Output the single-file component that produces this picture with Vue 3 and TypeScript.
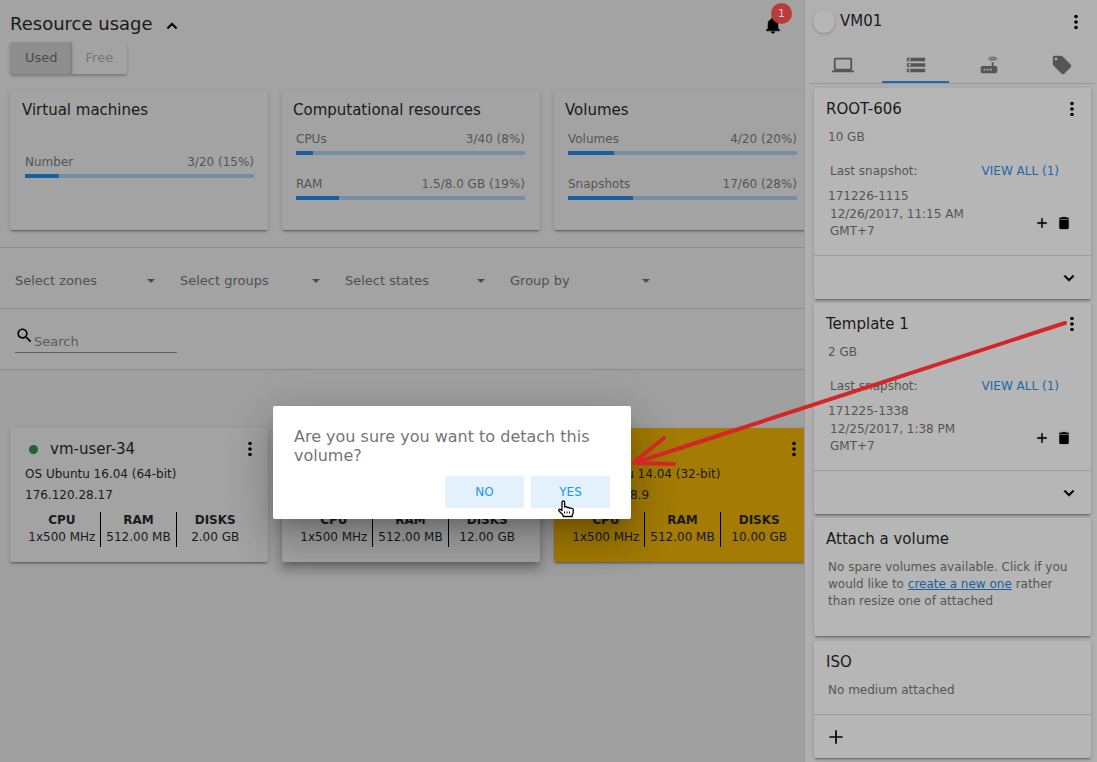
<script setup lang="ts">
interface Meter { label: string; value: string; percent: number }
interface UsageCard { title: string; meters: Meter[] }
interface Machine {
  name: string; os: string; ip: string; cpu: string; ram: string; disks: string; tone: string
}
interface Volume { name: string; size: string; snapshot: string; date: string }

const usage: UsageCard[] = [
  { title: 'Virtual machines', meters: [{ label: 'Number', value: '3/20 (15%)', percent: 15 }] },
  {
    title: 'Computational resources',
    meters: [
      { label: 'CPUs', value: '3/40 (8%)', percent: 7.5 },
      { label: 'RAM', value: '1.5/8.0 GB (19%)', percent: 18.75 },
    ],
  },
  {
    title: 'Volumes',
    meters: [
      { label: 'Volumes', value: '4/20 (20%)', percent: 20 },
      { label: 'Snapshots', value: '17/60 (28%)', percent: 28.3 },
    ],
  },
]
const filters: string[] = ['Select zones', 'Select groups', 'Select states', 'Group by']
const machines: Machine[] = [
  { name: 'vm-user-34', os: 'OS Ubuntu 16.04 (64-bit)', ip: '176.120.28.17', cpu: '1x500 MHz', ram: '512.00 MB', disks: '2.00 GB', tone: 'plain' },
  { name: '', os: '', ip: '', cpu: '1x500 MHz', ram: '512.00 MB', disks: '12.00 GB', tone: 'selected' },
  { name: '', os: 'OS Ubuntu 14.04 (32-bit)', ip: '176.120.28.9', cpu: '1x500 MHz', ram: '512.00 MB', disks: '10.00 GB', tone: 'amber' },
]
const tabs: { label: string; path: string }[] = [
  { label: 'Details', path: 'M20 18c1.100 0 1.990-.9 1.990-2L22 6c0-1.100-.9-2-2-2H4c-1.100 0-2 .9-2 2v10c0 1.100.9 2 2 2H0v2h24v-2h-4zM4 6h16v10H4V6z' },
  { label: 'Storage', path: 'M2 20h20v-4H2v4zm2-3h2v2H4v-2zM2 4v4h20V4H2zm4 3H4V5h2v2zm-4 7h20v-4H2v4zm2-3h2v2H4v-2z' },
  { label: 'Network', path: 'M20.200 5.900l.8-.8C19.600 3.700 17.800 3 16 3s-3.600.7-5 2.100l.8.8C13 4.800 14.500 4.200 16 4.200s3 .6 4.200 1.700zm-.9.8c-.9-.9-2.100-1.400-3.300-1.400s-2.400.5-3.300 1.400l.8.8c.7-.7 1.600-1 2.500-1 .9 0 1.800.3 2.500 1l.8-.8zM19 13h-2V9h-2v4H5c-1.100 0-2 .9-2 2v4c0 1.100.9 2 2 2h14c1.100 0 2-.9 2-2v-4c0-1.100-.9-2-2-2zM8 18H6v-2h2v2zm3.500 0h-2v-2h2v2zm3.500 0h-2v-2h2v2z' },
  { label: 'Tags', path: 'M21.410 11.580l-9-9C12.050 2.220 11.550 2 11 2H4c-1.100 0-2 .9-2 2v7c0 .55.22 1.050.59 1.420l9 9c.36.36.86.58 1.410.58.55 0 1.050-.22 1.410-.59l7-7c.37-.36.59-.86.59-1.410 0-.55-.23-1.060-.59-1.420zM5.500 7C4.670 7 4 6.330 4 5.500S4.670 4 5.500 4 7 4.670 7 5.500 6.330 7 5.500 7z' },
]
const volumes: Volume[] = [
  { name: 'ROOT-606', size: '10 GB', snapshot: '171226-1115', date: '12/26/2017, 11:15 AM GMT+7' },
  { name: 'Template 1', size: '2 GB', snapshot: '171225-1338', date: '12/25/2017, 1:38 PM GMT+7' },
]
</script>

<template>
  <div class="app">
    <main class="main">
      <header class="head">
        <div class="head-title">
          <h1>Resource usage</h1>
          <button class="icon-btn caret" aria-label="Collapse">
            <svg width="20" height="20" viewBox="0 0 24 24"><path d="M12 8l-6 6 1.410 1.410L12 10.830l4.590 4.580L18 14z" stroke="#000" stroke-width=".8" /></svg>
          </button>
        </div>
        <button class="icon-btn bell" aria-label="Notifications">
          <svg width="20" height="20" viewBox="0 0 24 24"><path d="M12 22c1.100 0 2-.9 2-2h-4c0 1.100.89 2 2 2zm6-6v-5c0-3.070-1.640-5.640-4.500-6.320V4c0-.83-.67-1.500-1.500-1.500s-1.500.67-1.500 1.500v.68C7.630 5.360 6 7.920 6 11v5l-2 2v1h16v-1l-2-2z" stroke="#000" stroke-width=".6" /></svg>
          <span class="badge">1</span>
        </button>
      </header>

      <div class="toggle">
        <button class="on">Used</button>
        <button>Free</button>
      </div>

      <section class="row usage">
        <article v-for="card in usage" :key="card.title" class="card usage-card">
          <h2>{{ card.title }}</h2>
          <div class="meters">
            <div v-for="m in card.meters" :key="m.label" class="meter">
              <div class="meter-text"><span>{{ m.label }}</span><span>{{ m.value }}</span></div>
              <div class="bar"><div class="fill" :style="{ width: m.percent + '%' }"></div></div>
            </div>
          </div>
        </article>
      </section>

      <section class="filters">
        <label v-for="f in filters" :key="f" class="filter">
          <select :aria-label="f"><option>{{ f }}</option></select>
          <svg width="8" height="4" viewBox="0 0 8 4"><path d="M0 0h8L4 4z" /></svg>
        </label>
      </section>

      <section class="search-row">
        <label class="search">
          <svg width="19" height="19" viewBox="0 0 24 24"><path d="M15.500 14h-.79l-.28-.27C15.410 12.590 16 11.110 16 9.500 16 5.910 13.090 3 9.500 3S3 5.910 3 9.500 5.910 16 9.500 16c1.610 0 3.090-.59 4.230-1.570l.27.28v.79l5 4.990L20.490 19l-4.990-5zm-6 0C7.010 14 5 11.990 5 9.500S7.010 5 9.500 5 14 7.010 14 9.500 11.990 14 9.500 14z" /></svg>
          <input type="text" placeholder="Search" aria-label="Search">
        </label>
      </section>

      <section class="row machines">
        <article v-for="vm in machines" :key="vm.disks" class="card vm" :class="vm.tone">
          <div class="vm-head">
            <span class="dot"></span>
            <h3>{{ vm.name }}</h3>
            <button class="icon-btn" aria-label="Machine menu">
              <svg width="22" height="22" viewBox="0 0 24 24"><circle cx="12" cy="6" r="2" /><circle cx="12" cy="12" r="2" /><circle cx="12" cy="18" r="2" /></svg>
            </button>
          </div>
          <p>{{ vm.os }}</p>
          <p>{{ vm.ip }}</p>
          <dl class="stats">
            <div><dt>CPU</dt><dd>{{ vm.cpu }}</dd></div>
            <div><dt>RAM</dt><dd>{{ vm.ram }}</dd></div>
            <div><dt>DISKS</dt><dd>{{ vm.disks }}</dd></div>
          </dl>
        </article>
      </section>
    </main>

    <aside class="side">
      <header class="side-head">
        <span class="avatar"></span>
        <h2>VM01</h2>
        <button class="icon-btn" aria-label="VM menu">
          <svg width="22" height="22" viewBox="0 0 24 24"><circle cx="12" cy="6" r="2" /><circle cx="12" cy="12" r="2" /><circle cx="12" cy="18" r="2" /></svg>
        </button>
      </header>
      <nav class="tabs">
        <button v-for="t in tabs" :key="t.label" :aria-label="t.label" :class="{ active: t.label === 'Storage' }">
          <svg width="22" height="22" viewBox="0 0 24 24"><path :d="t.path" /></svg>
        </button>
      </nav>

      <div class="side-list">
        <article v-for="v in volumes" :key="v.name" class="card side-card">
          <div class="side-title">
            <h3>{{ v.name }}</h3>
            <button class="icon-btn" aria-label="Volume menu">
              <svg width="22" height="22" viewBox="0 0 24 24"><circle cx="12" cy="6" r="2" /><circle cx="12" cy="12" r="2" /><circle cx="12" cy="18" r="2" /></svg>
            </button>
          </div>
          <p class="size">{{ v.size }}</p>
          <div class="snap-head">
            <span>Last snapshot:</span>
            <button class="link-btn">VIEW ALL (1)</button>
          </div>
          <p class="snap-name">{{ v.snapshot }}</p>
          <div class="snap">
            <span class="date">{{ v.date }}</span>
            <button class="icon-btn" aria-label="Create snapshot">
              <svg width="16" height="16" viewBox="0 0 24 24"><path d="M19 13h-6v6h-2v-6H5v-2h6V5h2v6h6v2z" stroke="#000" stroke-width=".4" /></svg>
            </button>
            <button class="icon-btn" aria-label="Delete snapshot">
              <svg width="16" height="16" viewBox="0 0 24 24"><path d="M5 19c0 1.100.9 2 2 2h10c1.100 0 2-.9 2-2V7H5v12zM19 4h-3.500l-1-1h-5l-1 1H5v2h14V4z" stroke="#000" stroke-width=".4" /></svg>
            </button>
          </div>
          <div class="side-foot end">
            <button class="icon-btn" aria-label="Expand">
              <svg width="20" height="20" viewBox="0 0 24 24"><path d="M16.590 8.590L12 13.170 7.410 8.590 6 10l6 6 6-6z" stroke="#000" stroke-width=".8" /></svg>
            </button>
          </div>
        </article>

        <article class="card side-card attach">
          <div class="side-title"><h3>Attach a volume</h3></div>
          <p class="note">No spare volumes available. Click if you would like to <a href="#create">create a new one</a> rather than resize one of attached</p>
        </article>

        <article class="card side-card">
          <div class="side-title"><h3>ISO</h3></div>
          <p class="note">No medium attached</p>
          <div class="side-foot">
            <button class="icon-btn" aria-label="Attach ISO">
              <svg width="20" height="20" viewBox="0 0 24 24"><path d="M20 13h-7v7h-2v-7H4v-2h7V4h2v7h7v2z" /></svg>
            </button>
          </div>
        </article>
      </div>
    </aside>

    <div class="dialog" role="dialog" aria-modal="true">
      <p>Are you sure you want to detach this volume?</p>
      <div class="actions">
        <button>NO</button>
        <button>YES</button>
      </div>
    </div>

    <svg class="arrow" width="440" height="160" viewBox="0 0 440 160" aria-hidden="true">
      <path d="M435 13L4 153M34 128L4 152M44 154L4 153" />
    </svg>
    <svg class="cursor" width="17" height="18" viewBox="0 0 17 18" aria-hidden="true">
      <path d="M4 2.500q0-1.500 1.300-1.500T6.600 2.500V7q2-.8 2.700.6 2-.5 2.600.8 2.800-.8 3.300 1V12q0 2-1 3v1.500H5V15L1 11q-.8-2 1-1.800L4 10.500z" />
      <path class="folds" d="M6.500 11.500v2M9 11.500v2M11.500 11.500v2" />
    </svg>
  </div>
</template>

<style>
body { margin: 0; background: #a0a0a0; }
</style>

<style scoped>
.app {
  display: flex;
  position: relative;
  min-height: 100vh;
  overflow: hidden;
  font-family: "DejaVu Sans", sans-serif;
  font-size: 12px;
  line-height: 17px;
  color: #1a1a1a;
}
.app *, .app { box-sizing: border-box; }
h1, h2, h3, p, dl, dd { margin: 0; font-weight: 400; }
button { font: inherit; border: 0; padding: 0; background: none; cursor: pointer; }
svg { display: block; }
.icon-btn { flex: none; color: #000; }
.card {
  border-radius: 2px;
  background: #a3a3a3;
  box-shadow: 0 3px 1px -2px rgba(0, 0, 0, .2), 0 2px 2px 0 rgba(0, 0, 0, .14), 0 1px 5px 0 rgba(0, 0, 0, .12);
}

.main { flex: 1; min-width: 0; overflow: hidden; background: #a0a0a0; }
.head { display: flex; justify-content: space-between; align-items: center; height: 42px; padding: 6px 21px 0 10px; background: #a3a3a3; }
.head-title { display: flex; align-items: center; gap: 9px; }
.caret { margin-top: 4px; }
h1 { font-size: 18px; line-height: 24px; }
.bell { position: relative; margin-top: 2px; }
.badge {
  position: absolute; left: 8px; top: -12px; width: 21px; height: 21px; border-radius: 50%;
  background: #b93c3a; color: #d0d0d0; font-size: 11px; line-height: 21px; text-align: center;
}
.toggle { display: flex; padding: 0 10px; background: #a3a3a3; }
.toggle button { height: 32px; padding: 0 14px 2px; font-size: 13px; color: #777; box-shadow: 0 2px 3px rgba(0, 0, 0, .25); border-radius: 0 2px 2px 0; }
.toggle .on { padding: 0 14px 2px 15px; background: #8e8e8e; color: #4c4c4c; border-radius: 2px 0 0 2px; }

.row { display: flex; gap: 14px; padding: 0 10px; }
.row > .card { flex: 0 0 258px; }
.usage { padding-top: 17px; padding-bottom: 17px; background: #a3a3a3; border-bottom: 1px solid #8b8b8b; }
.usage-card { display: flex; flex-direction: column; height: 139px; padding: 9px 15px 19px 14px; }
.usage-card:first-child { padding-right: 14px; padding-left: 15px; }
.usage-card h2 { margin-left: -3px; font-size: 15px; line-height: 20px; }
.meters { flex: 1; display: flex; flex-direction: column; justify-content: center; gap: 21px; color: #555; }
.meter-text { display: flex; justify-content: space-between; line-height: 17px; }
.bar { height: 4px; margin-top: 3px; background: #778da2; }
.fill { height: 4px; background: #1760a0; }

.filters { display: flex; gap: 25px; height: 61px; padding: 0 15px; align-items: center; background: #a3a3a3; border-bottom: 1px solid #8b8b8b; }
.filter { display: flex; align-items: center; width: 140px; margin-top: 5px; }
.filter svg { flex: none; fill: #4c4c4c; }
select { flex: 1; appearance: none; border: 0; padding: 0; background: none; font: inherit; font-size: 13px; line-height: 20px; color: #505050; }
.search-row { height: 61px; padding: 15px; background: #a3a3a3; border-bottom: 1px solid #8b8b8b; }
.search { display: flex; align-items: flex-start; width: 162px; height: 29px; border-bottom: 1px solid #5c5c5c; }
.search svg { margin-top: 2px; }
.search input { width: 140px; height: 20px; margin-top: 7px; padding: 0; border: 0; outline: 0; background: none; font: inherit; font-size: 13px; }
.search input::placeholder { color: #5c5c5c; opacity: 1; }

.machines { padding-top: 58px; }
.vm { height: 134px; padding: 9px 15px 0; }
.vm.selected { box-shadow: 0 5px 5px -3px rgba(0, 0, 0, .2), 0 8px 10px 1px rgba(0, 0, 0, .14), 0 3px 14px 2px rgba(0, 0, 0, .12); }
.vm.amber { background: #a37b05; }
.vm-head { display: flex; align-items: center; height: 24px; margin-bottom: 5px; }
.vm-head h3 { flex: 1; }
.vm-head button { margin-right: -8px; }
.dot { width: 9px; height: 9px; margin: 0 12px 0 4px; border-radius: 50%; background: #276329; }
.vm p { height: 17px; margin-bottom: 4px; }
.stats { display: flex; margin: 8px 0 0 -1px; text-align: center; white-space: nowrap; }
.stats div { flex: 1 1 0; min-width: 0; height: 35px; border-left: 1px solid #000; }
.stats div:first-child { border-left: 0; }
.stats dt { font-weight: 700; }

.side { flex: 0 0 293px; padding: 0 6px 0 4px; border-left: 1px solid #9a9a9a; background: #b0b0b0; }
.side-head { display: flex; align-items: center; gap: 5px; height: 43px; padding: 0 4px; }
.avatar { width: 22px; height: 22px; border-radius: 50%; background: #b6b6b6; box-shadow: 0 1px 3px rgba(0, 0, 0, .22); }
.side-head h2 { flex: 1; padding-bottom: 2px; font-size: 15px; line-height: 20px; }
.tabs { display: flex; justify-content: space-between; height: 41px; margin-right: -4px; border-bottom: 1px solid #979797; }
.tabs button { display: flex; justify-content: center; align-items: center; width: 67px; height: 40px; padding-top: 6px; border-bottom: 2px solid transparent; }
.tabs svg { fill: #555; }
.tabs .active { border-bottom-color: #1a6bb0; }
.side-list { display: flex; flex-direction: column; gap: 4px; padding: 4px 0 0 5px; }
.side-card { background: #b6b6b6; color: #555; }
.side-title { display: flex; justify-content: space-between; align-items: center; height: 41px; padding: 0 8px 0 12px; color: #1a1a1a; }
h3 { font-size: 15px; line-height: 20px; }
.size { margin: 0 14px; padding-bottom: 17px; }
.snap-head { display: flex; justify-content: space-between; padding: 0 32px 0 16px; }
.link-btn { color: #1b68a8; }
.snap-name { margin: 8px 14px 1px; }
.snap { display: flex; align-items: center; gap: 6px; padding: 0 19px 0 16px; }
.date { flex: 1; padding-right: 40px; }
.side-foot { display: flex; align-items: center; height: 44px; margin-top: 15px; padding: 0 12px; border-top: 1px solid #9c9c9c; }
.end { justify-content: flex-end; }
.attach { height: 118px; margin-bottom: 1px; }
.note { margin: 0 14px; }
.note a { color: #1760a0; }

.dialog {
  position: absolute; left: 273px; top: 406px; width: 358px; padding: 21px 21px 11px; border-radius: 2px; background: #fff;
  box-shadow: 0 11px 15px -7px rgba(0, 0, 0, .2), 0 24px 38px 3px rgba(0, 0, 0, .14), 0 9px 46px 8px rgba(0, 0, 0, .12);
}
.dialog p { font-size: 16px; line-height: 19px; color: #757575; }
.actions { display: flex; justify-content: flex-end; gap: 7px; margin-top: 11px; }
.actions button { width: 79px; height: 32px; border-radius: 2px; background: #e3f1fd; color: #2196f3; }
.arrow { position: absolute; left: 630px; top: 310px; pointer-events: none; }
.arrow path { fill: none; stroke: #d42626; stroke-width: 4; stroke-linecap: round; }
.cursor { position: absolute; left: 558px; top: 500px; pointer-events: none; }
.cursor path { fill: #fff; stroke: #000; stroke-width: 1.3; stroke-linejoin: round; }
.cursor .folds { stroke-width: 1; }
</style>
